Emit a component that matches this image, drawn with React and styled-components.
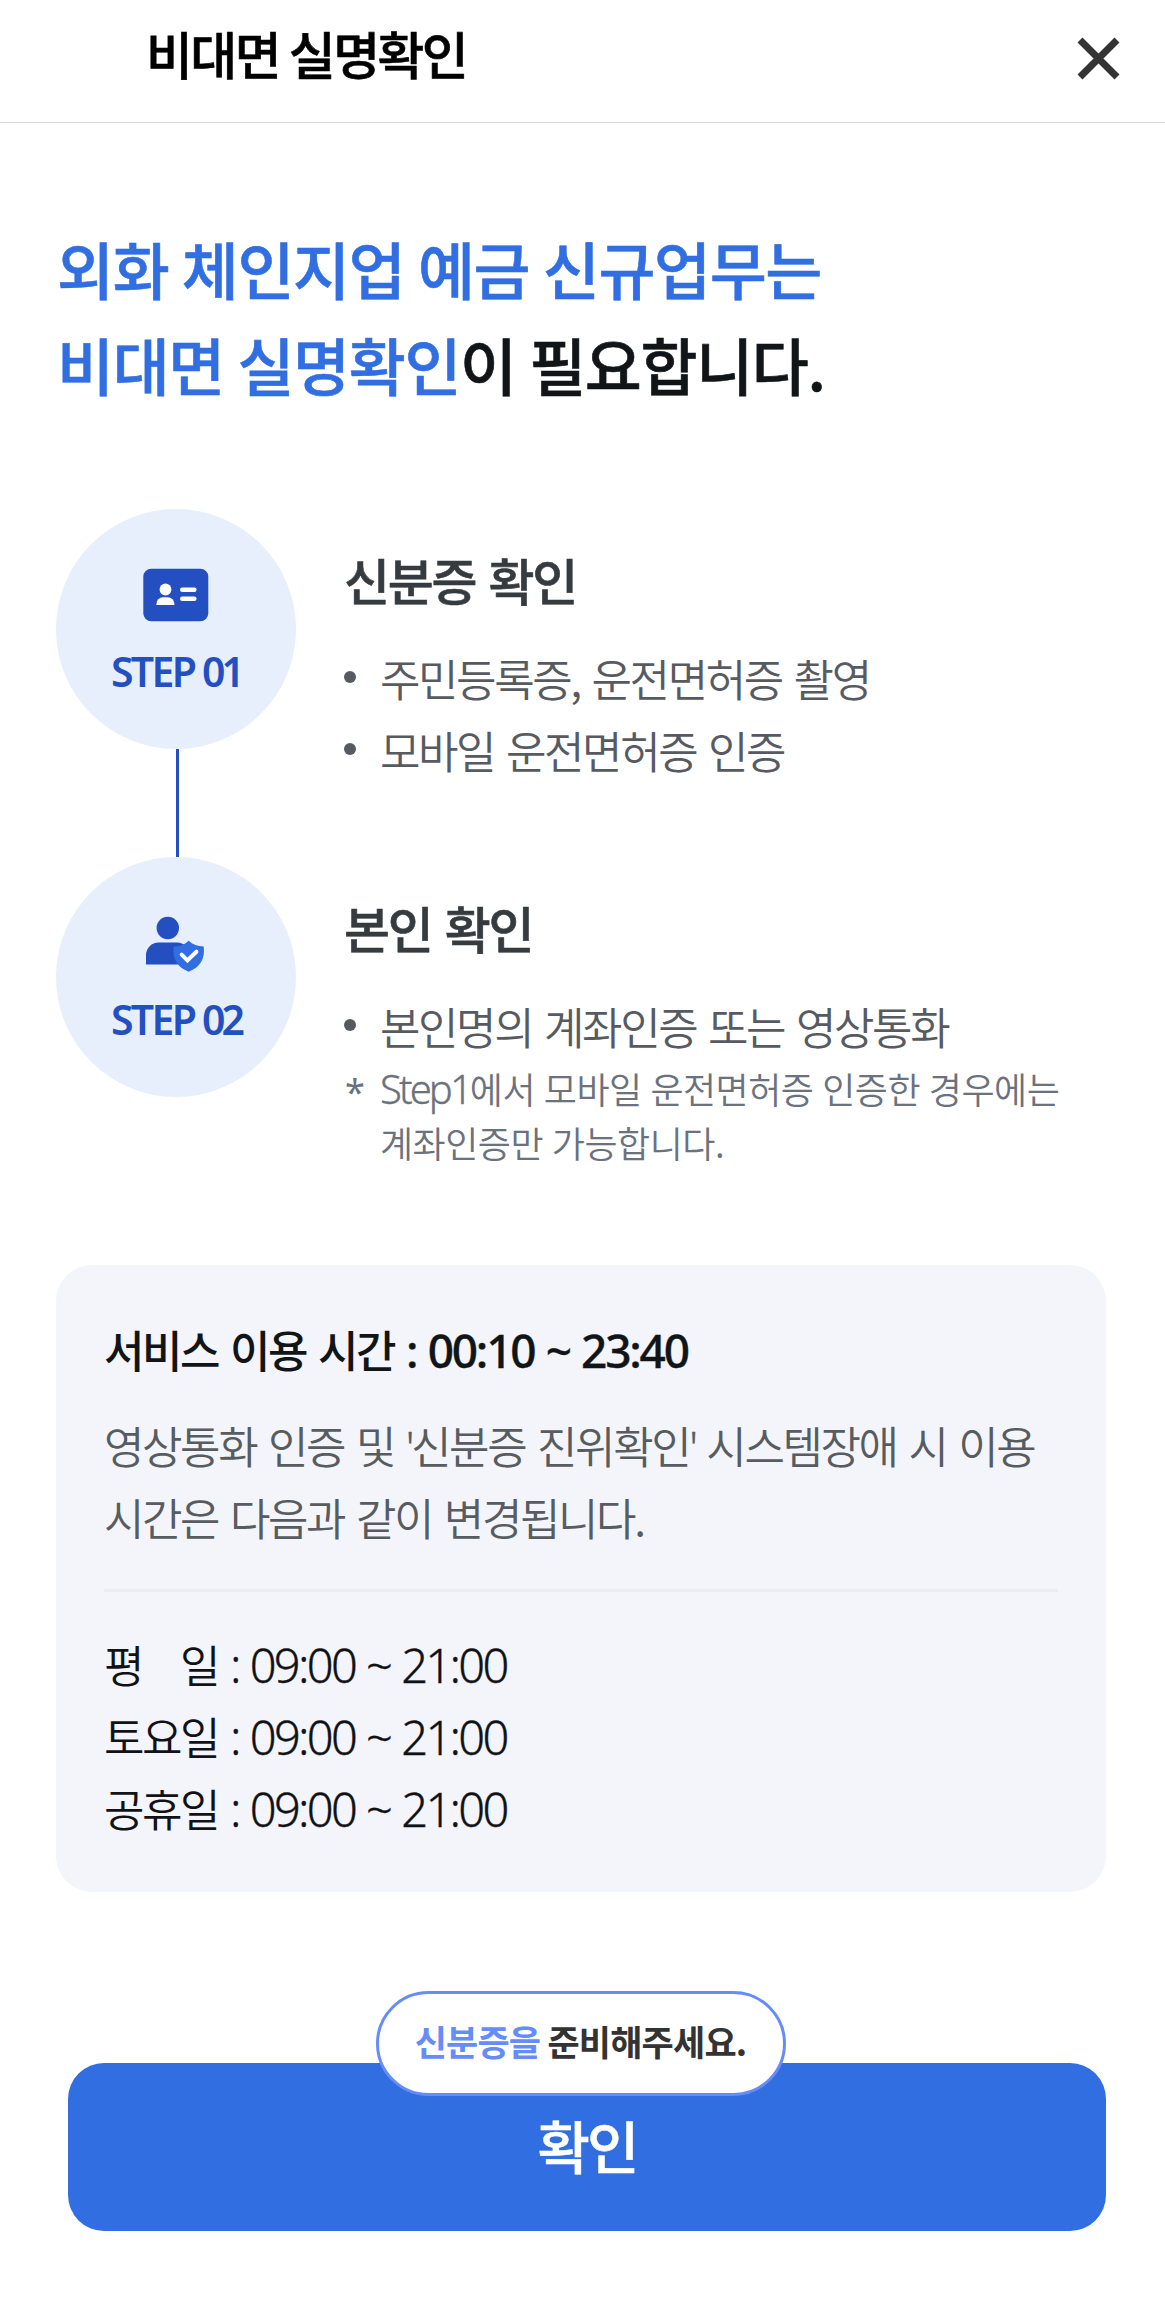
import React from 'react'
import styled, { createGlobalStyle, css } from 'styled-components'

const GlobalStyle = createGlobalStyle`
 * {
  box-sizing: border-box;
 }
 body {
  margin: 0;
  background: #fff;
  font-family: 'Noto Sans CJK KR', 'Noto Sans', sans-serif;
 }
 h1, h2, h3, p, ul {
  margin: 0;
  padding: 0;
  font-weight: 500;
 }
`

const Wrapper = styled.div`
 width: 1165px;
 height: 2304px;
 background: #fff;
 white-space: nowrap;
`

const Header = styled.header`
 height: 123px;
 display: flex;
 justify-content: space-between;
 border-bottom: 1px solid #dadada;
 padding: 23px 45px 0 146px;
`

const HeaderTitle = styled.h1`
 font-size: 51px;
 line-height: 60px;
 letter-spacing: -2.6px;
 word-spacing: 1px;
 color: #000;
 -webkit-text-stroke: 0.6px currentColor;
`

const CloseButton = styled.button`
 width: 43px;
 height: 43px;
 margin-top: 14px;
 padding: 0;
 border: 0;
 background: none;
`

const Main = styled.main`
 padding: 97px 59px 0 56px;
`

const Heading = styled.h2`
 padding-left: 1px;
 font-size: 62px;
 line-height: 96px;
 letter-spacing: -1.4px;
 word-spacing: 1px;
 color: #111518;
 -webkit-text-stroke: 0.6px currentColor;
`

const Blue = styled.span`
 color: #306ee1;
`

const Steps = styled.div`
 margin-top: 97px;
`

const StepRow = styled.section`
 display: flex;
 gap: 48px;
`

const StepSide = styled.div`
 display: flex;
 flex-direction: column;
 align-items: center;
`

const Circle = styled.div`
 width: 240px;
 height: 240px;
 border-radius: 50%;
 background: #e6effb;
 display: flex;
 flex-direction: column;
 align-items: center;
 padding-top: 56px;
`

const StepLabel = styled.div`
 margin-top: 18px;
 font-family: 'Noto Sans', sans-serif;
 font-size: 41px;
 font-weight: 600;
 line-height: 56px;
 letter-spacing: -2.7px;
 color: #244fc0;
`

const StepNumber = styled.span`
 letter-spacing: -4px;
`

const Connector = styled.div`
 width: 3px;
 height: 108px;
 margin-left: 3px;
 background: #244fc0;
`

const StepBody = styled.div`
 padding-top: 40px;
`

const StepTitle = styled.h3`
 font-size: 50px;
 line-height: 60px;
 letter-spacing: -2.2px;
 word-spacing: 4px;
 color: #353b3f;
 margin-bottom: 33px;
 -webkit-text-stroke: 0.6px currentColor;
`

const Text = styled.p`
 font-size: 44px;
 line-height: 72px;
 font-weight: ${({ strong }) => strong ? 500 : 350};
 letter-spacing: -2.42px;
 word-spacing: 4.4px;
 color: ${({ color }) => color};
`

const BulletItem = styled.li`
 display: flex;
 align-items: center;
 list-style: none;
 &::before {
  content: '';
  width: 12px;
  height: 12px;
  margin-right: 24px;
  margin-top: -2px;
  border-radius: 50%;
  background: #575b61;
 }
`

const Note = styled.div`
 display: flex;
 margin-top: -1px;
 font-size: 36px;
 font-weight: 350;
 line-height: 54px;
 letter-spacing: -0.5px;
 word-spacing: 1.2px;
 color: #6b717d;
`

const NoteMark = styled.span`
 width: 36px;
 height: 54px;
 padding: 4px 0 0 1px;
 font-family: 'Noto Sans', sans-serif;
 font-weight: 400;
`

const Latin = styled.span`
 font-family: 'Noto Sans', sans-serif;
 line-height: 0;
 word-spacing: 1.5px;
 font-size: ${({ size }) => size}px;
 letter-spacing: ${({ tight }) => tight}px;
 -webkit-text-stroke: 0.35px currentColor;
 ${({ weight }) => weight && css`
  font-weight: ${weight};
 `}
`

const InfoCard = styled.section`
 width: 1050px;
 height: 627px;
 margin-top: 96px;
 padding: 48px 48px 0;
 border-radius: 36px;
 background: #f3f5fb;
`

const Divider = styled.div`
 height: 3px;
 margin: 36px 0;
 background: #ebedf2;
`

const CardText = styled.div`
 margin-top: 24px;
`

const DayGap = styled.span`
 display: inline-block;
 width: 38px;
`

const Footer = styled.footer`
 position: relative;
 margin: 171px 0 0 12px;
`

const ConfirmButton = styled.button`
 display: block;
 width: 1038px;
 height: 168px;
 border: 0;
 border-radius: 36px;
 padding: 0 0 6px;
 background: #306ee1;
 color: #fff;
 font-family: inherit;
 font-size: 57px;
 font-weight: 500;
 letter-spacing: -3px;
 -webkit-text-stroke: 0.5px currentColor;
`

// sits half over the confirm button
const Balloon = styled.div`
 position: absolute;
 top: -72px;
 left: 308px;
 width: 410px;
 height: 105px;
 padding: 0 1px 6px 0;
 border: 3px solid #668cfa;
 border-radius: 53px;
 background: #fff;
 display: flex;
 align-items: center;
 justify-content: center;
 font-size: 35px;
 line-height: 50px;
 font-weight: 700;
 letter-spacing: -0.8px;
 color: #333;
 white-space: pre;
`

const BalloonPoint = styled.span`
 color: #668cfa;
`

const CloseIcon = () => (
  <svg width="43" height="43" viewBox="0 0 43 43" fill="none" stroke="#333" strokeWidth="7">
    <path d="M3 3L40 40M40 3L3 40" />
  </svg>
)

const IdCardIcon = () => (
  <svg width="72" height="60" viewBox="0 0 72 60">
    <rect x="3.3" y="3.7" width="65" height="52.6" rx="8" fill="#244fc0" />
    <g fill="#fff">
      <circle cx="25.5" cy="24.5" r="5.9" />
      <path d="M16.4 40v-1.2a6.6 6.6 0 0 1 6.6-6.6h4.8a6.6 6.6 0 0 1 6.6 6.6V40z" />
      <rect x="40" y="22.4" width="16.6" height="4.6" rx="2.3" />
      <rect x="40" y="31.4" width="16.6" height="4.6" rx="2.3" />
    </g>
  </svg>
)

const PersonIcon = () => (
  <svg width="72" height="60" viewBox="0 0 72 60">
    <circle cx="27.8" cy="15" r="11.2" fill="#244fc0" />
    <path d="M6 51.5V42a12.5 12.5 0 0 1 12.5-12.5H37A12.5 12.5 0 0 1 49.5 42v9.5z" fill="#244fc0" />
    <path d="M48.7 27.8c3.8 3.6 9 5.6 15 5.8 1.6 12.4-3.6 20.8-15 25.2-11.4-4.4-16.6-12.8-15-25.2 6-.2 11.2-2.2 15-5.8z" fill="#306ee1" />
    <path d="M41.7 41.7l5.7 5.8 9-8.8" fill="none" stroke="#fff" strokeWidth="4" strokeLinecap="round" />
  </svg>
)

const Step = ({ number, title, icon, last, children }) => (
  <StepRow>
    <StepSide>
      <Circle>
        {icon}
        <StepLabel>STEP <StepNumber>{number}</StepNumber></StepLabel>
      </Circle>
      {!last && <Connector />}
    </StepSide>
    <StepBody>
      <StepTitle>{title}</StepTitle>
      {children}
    </StepBody>
  </StepRow>
)

const Bullet = ({ children }) => (
  <BulletItem><Text color="#575b61">{children}</Text></BulletItem>
)

const Quote = () => <Latin size={44} tight={-3.5}>'</Latin>

const Hours = ({ day }) => (
  <Text color="#111216">{day} <Latin size={47} tight={-2.7} weight={350}>: 09:00 ~ 21:00</Latin></Text>
)

const App = () => {
  return (
    <Wrapper>
      <GlobalStyle />
      <Header>
        <HeaderTitle>비대면 실명확인</HeaderTitle>
        <CloseButton aria-label="닫기"><CloseIcon /></CloseButton>
      </Header>
      <Main>
        <Heading>
          <Blue>외화 체인지업 예금 신규업무는<br />비대면 실명확인</Blue>이 필요합니다.
        </Heading>
        <Steps>
          <Step number="01" title="신분증 확인" icon={<IdCardIcon />}>
            <ul>
              <Bullet>주민등록증, 운전면허증 촬영</Bullet>
              <Bullet>모바일 운전면허증 인증</Bullet>
            </ul>
          </Step>
          <Step number="02" title="본인 확인" icon={<PersonIcon />} last>
            <ul>
              <Bullet>본인명의 계좌인증 또는 영상통화</Bullet>
            </ul>
            <Note>
              <NoteMark>*</NoteMark>
              <div>
                <Latin size={40} tight={-2.9} weight={350}>Step1</Latin>에서 모바일 운전면허증 인증한 경우에는<br />
                계좌인증만 가능합니다.
              </div>
            </Note>
          </Step>
        </Steps>
        <InfoCard>
          <Text strong color="#111518">서비스 이용 시간 <Latin size={46} tight={-2.2} weight={500}>: 00:10 ~ 23:40</Latin></Text>
          <CardText>
            <Text color="#575c60">영상통화 인증 및 <Quote />신분증 진위확인<Quote /> 시스템장애 시 이용</Text>
            <Text color="#575c60">시간은 다음과 같이 변경됩니다.</Text>
          </CardText>
          <Divider />
          <Hours day={<>평<DayGap />일</>} />
          <Hours day="토요일" />
          <Hours day="공휴일" />
        </InfoCard>
        <Footer>
          <ConfirmButton>확인</ConfirmButton>
          <Balloon><BalloonPoint>신분증을</BalloonPoint> 준비해주세요.</Balloon>
        </Footer>
      </Main>
    </Wrapper>
  )
}

export default App
